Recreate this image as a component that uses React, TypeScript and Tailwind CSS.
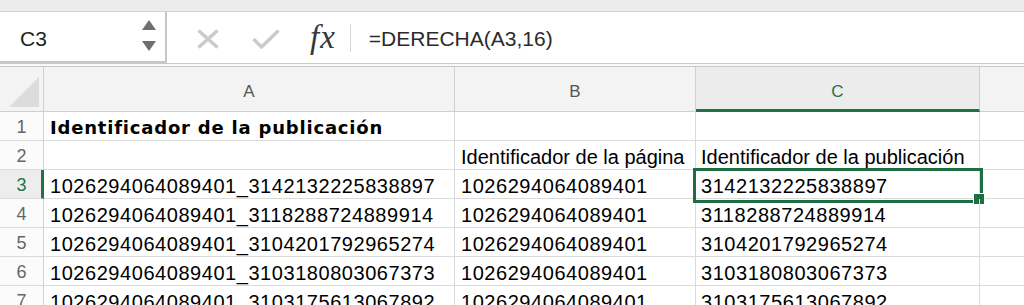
import React from "react";

const rows = [
  { n: "1", a: "Identificador de la publicación", b: "", c: "", bold: true },
  { n: "2", a: "", b: "Identificador de la página", c: "Identificador de la publicación" },
  { n: "3", a: "1026294064089401_3142132225838897", b: "1026294064089401", c: "3142132225838897" },
  { n: "4", a: "1026294064089401_3118288724889914", b: "1026294064089401", c: "3118288724889914" },
  { n: "5", a: "1026294064089401_3104201792965274", b: "1026294064089401", c: "3104201792965274" },
  { n: "6", a: "1026294064089401_3103180803067373", b: "1026294064089401", c: "3103180803067373" },
  { n: "7", a: "1026294064089401_3103175613067892", b: "1026294064089401", c: "3103175613067892" },
];

function isNum(s: string) {
  return /^[0-9_]+$/.test(s);
}

function CellText({ text, bold }: { text: string; bold?: boolean }) {
  if (!text) return null;
  if (bold) {
    return (
      <span className="font-['DejaVu_Sans',Verdana,sans-serif] font-bold text-[18px] leading-[20px] tracking-[0.8px]">
        {text}
      </span>
    );
  }
  return (
    <span className={"text-[20px] leading-[20px] " + (isNum(text) ? "tracking-[0.55px]" : "")}>{text}</span>
  );
}

export default function App() {
  return (
    <div className="w-[1024px] h-[305px] overflow-hidden bg-white font-['Liberation_Sans',Arial,sans-serif] text-black">
      {/* window strip */}
      <div className="h-[12px] bg-[#ececec] border-b border-[#d2d2d2]" />

      {/* Formula bar */}
      <div className="flex h-[51px] bg-white">
        <div className="w-[167px] flex items-center pl-5 pr-[9px] border-r-2 border-b-2 border-[#c6c6c6]">
          <span className="text-[21px] text-[#222] mt-[5px]">C3</span>
          <svg width="14" height="32" viewBox="0 0 14 32" className="ml-auto mt-[-2px]">
            <polygon points="0,10 7,0 14,10" fill="#6f6f6f" />
            <polygon points="0,21 14,21 7,31" fill="#6f6f6f" />
          </svg>
        </div>
        <div className="flex-1 flex items-center">
          <svg width="22" height="20" viewBox="0 0 22 20" className="ml-[30px] mt-[3px]">
            <path d="M1.5 1.5 L20.5 18.5 M20.5 1.5 L1.5 18.5" stroke="#cbcbcb" strokeWidth="3.5" fill="none" />
          </svg>
          <svg width="28" height="20" viewBox="0 0 28 20" className="ml-[33px] mt-[3px]">
            <polyline points="1.5,10 9.5,18 26.5,1.5" stroke="#cbcbcb" strokeWidth="3.5" fill="none" />
          </svg>
          <span className="ml-[30px] font-['Liberation_Serif',serif] italic text-[33px] leading-none text-[#363636] tracking-[1px]">
            fx
          </span>
          <div className="ml-[14px] w-px h-[28px] bg-[#d3d3d3]" />
          <span className="ml-[18px] text-[21px] text-[#2b2b2b] mt-[2px]">=DERECHA(A3,16)</span>
        </div>
      </div>

      {/* gap band */}
      <div className="h-[4px] bg-[#f8f8f8] border-t border-b border-[#c9c9c9]" />

      {/* Column headers */}
      <div className="flex h-[45px] bg-[#f3f3f3] text-[17px] text-[#555]">
        <div className="w-[44px] border-r border-b border-[#cfcfcf] flex items-end justify-end pr-[4px] pb-[4px]">
          <svg width="30" height="30" viewBox="0 0 30 30">
            <polygon points="30,0 30,30 0,30" fill="#dcdcdc" />
          </svg>
        </div>
        <div className="w-[411px] border-r border-b border-[#d0d0d0] flex items-center justify-center pt-[6px]">A</div>
        <div className="w-[241px] border-r border-b border-[#d0d0d0] flex items-center justify-center pt-[6px]">B</div>
        <div className="w-[284px] border-r border-[#d0d0d0] border-b-[3px] border-b-[#217346] bg-[#ececec] flex items-center justify-center pt-[8px] text-[#217346]">
          C
        </div>
        <div className="flex-1 border-b border-[#d0d0d0]" />
      </div>

      {/* Rows */}
      {rows.map((r) => {
        const sel = r.n === "3";
        return (
          <div key={r.n} className="flex h-[29px]">
            <div
              className={
                "w-[44px] flex items-end justify-center pb-[3px] border-b border-[#dadada] text-[18px] leading-[20px] " +
                (sel
                  ? "bg-[#ededed] border-r-[3px] border-r-[#217346] text-[#217346] pl-[2px]"
                  : "bg-[#fbfbfb] border-r border-r-[#cfcfcf] text-[#666]")
              }
            >
              {r.n}
            </div>
            <div className="w-[411px] border-r border-b border-[#dadada] flex items-end pl-[6px] pb-[2px] whitespace-nowrap">
              <CellText text={r.a} bold={r.bold} />
            </div>
            <div className="w-[241px] border-r border-b border-[#dadada] flex items-end pl-[6px] pb-[2px] whitespace-nowrap">
              <CellText text={r.b} />
            </div>
            <div className="relative w-[284px] border-r border-b border-[#dadada] flex items-end pl-[5px] pb-[2px] whitespace-nowrap">
              <CellText text={r.c} />
              {sel && (
                <>
                  <div className="absolute left-[-3px] top-[-2px] w-[290px] h-[35px] border-[3px] border-[#1f6e43]" />
                  <div className="absolute left-[277px] top-[23px] w-[12px] h-[12px] bg-[#1f6e43] border border-white" />
                </>
              )}
            </div>
            <div className="flex-1 border-b border-[#dadada]" />
          </div>
        );
      })}
    </div>
  );
}
